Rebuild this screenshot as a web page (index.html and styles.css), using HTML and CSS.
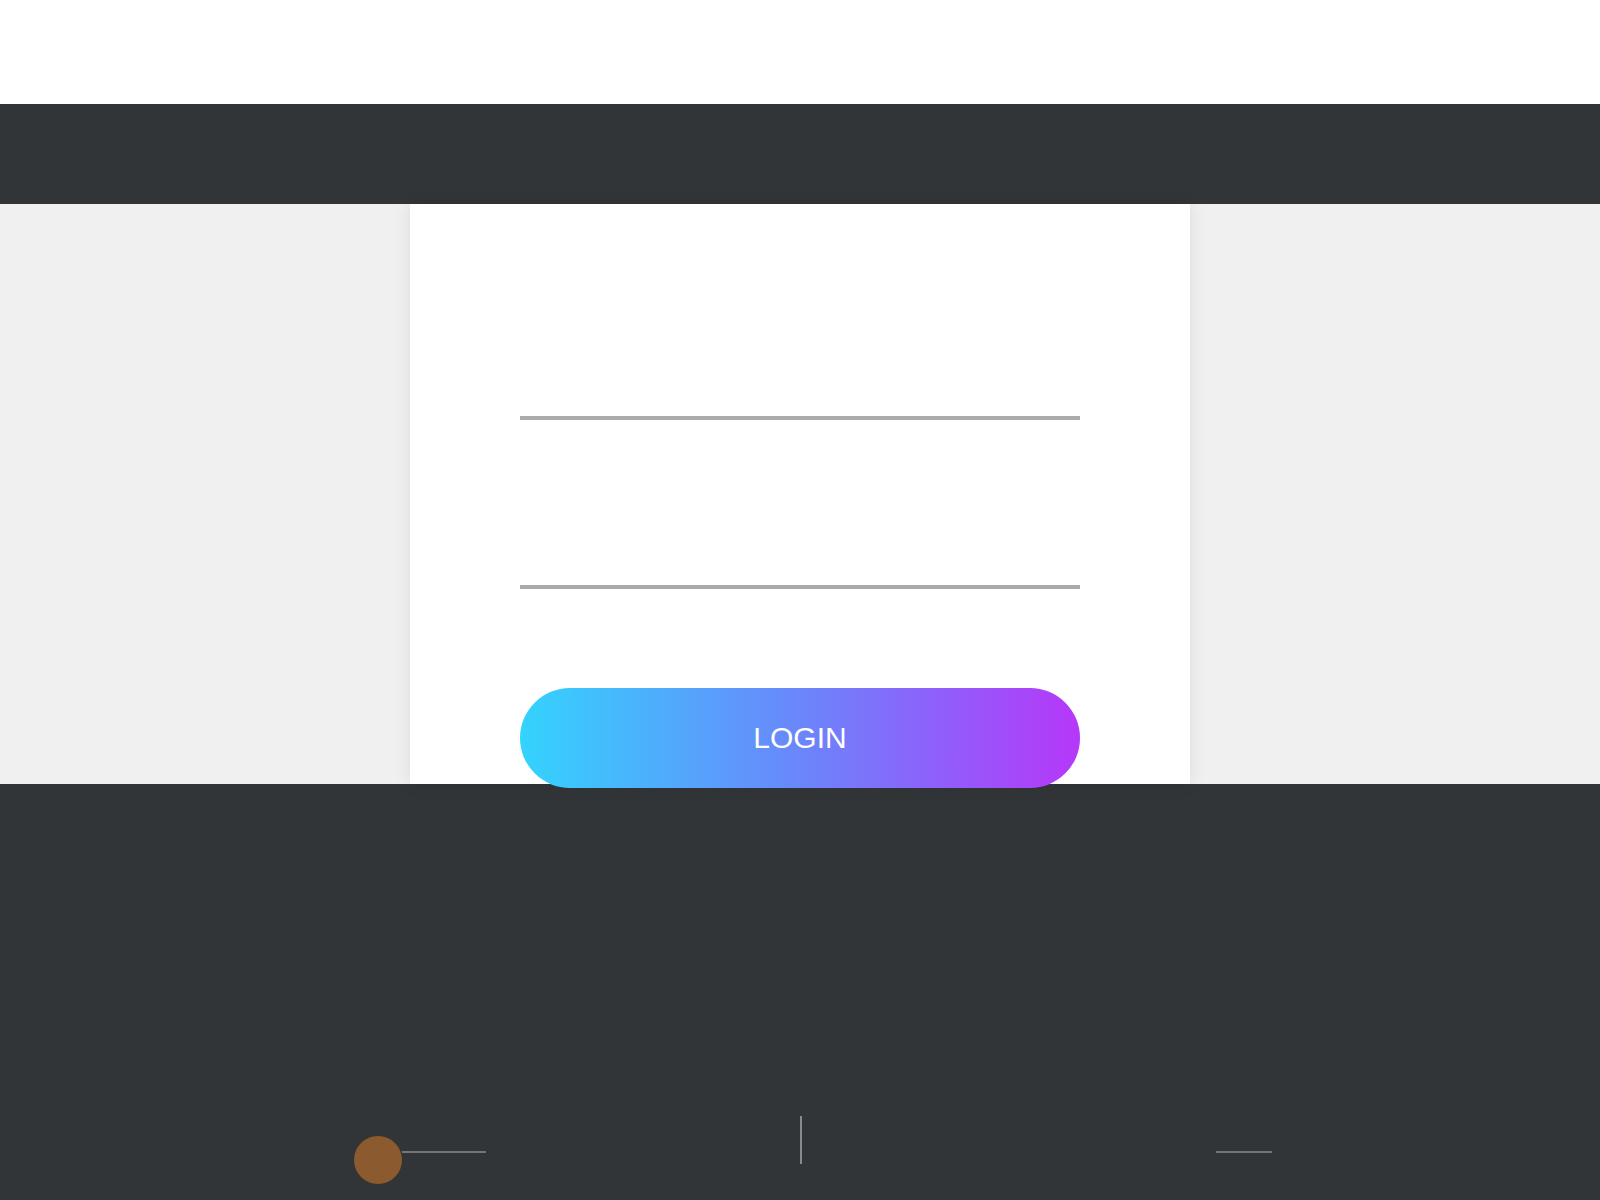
FILE: index.html
```html
<!DOCTYPE html>
<html lang="en">
<head>
<meta charset="utf-8">
<title>Login</title>
<link rel="stylesheet" href="styles.css">
</head>
<body>
<div class="topbar"></div>
<header class="navbar"></header>
<main class="stage">
  <form class="card">
    <input class="field field-user" type="text" aria-label="Username">
    <input class="field field-pass" type="password" aria-label="Password">
    <button class="login-btn" type="button">LOGIN</button>
  </form>
</main>
<footer class="footer">
  <div class="slider-row">
    <span class="dot"></span>
    <span class="hline hline-left"></span>
    <span class="vline"></span>
    <span class="hline hline-right"></span>
  </div>
</footer>
</body>
</html>
```
FILE: styles.css
```css
html, body {
  margin: 0;
  padding: 0;
  background: #ffffff;
  font-family: "Liberation Sans", Arial, sans-serif;
}

.topbar {
  height: 104px;
  background: #ffffff;
}

.navbar {
  height: 100px;
  background: #323538;
}

.stage {
  height: 580px;
  background: #f0f0f0;
  display: flex;
  justify-content: center;
  position: relative;
  z-index: 1;
}

.card {
  width: 780px;
  height: 580px;
  box-sizing: border-box;
  background: #ffffff;
  box-shadow: 0 0 16px rgba(0, 0, 0, 0.09);
  padding: 166px 110px 0;
  display: flex;
  flex-direction: column;
  margin: 0;
}

.field {
  display: block;
  width: 100%;
  height: 50px;
  box-sizing: border-box;
  border: none;
  border-bottom: 4px solid #aaaaaa;
  background: transparent;
  outline: none;
  padding: 0;
  margin: 0;
  flex: none;
  font-family: inherit;
  font-size: 20px;
}

.field-pass {
  margin-top: 119px;
}

.login-btn {
  margin-top: 99px;
  width: 560px;
  height: 100px;
  flex: none;
  border: none;
  border-radius: 50px;
  background: linear-gradient(to right, #34d3fd, #6a86fb 50%, #b637f9);
  color: #ffffff;
  font-family: "Liberation Sans", Arial, sans-serif;
  font-size: 30px;
  padding: 0;
  cursor: pointer;
}

.footer {
  height: 416px;
  background: #323538;
  box-sizing: border-box;
  padding-top: 332px;
}

.slider-row {
  display: flex;
  align-items: flex-start;
  padding-left: 354px;
  height: 68px;
}

.dot {
  width: 48px;
  height: 48px;
  border-radius: 50%;
  background: #8b5a2e;
  margin-top: 20px;
  flex: none;
}

.hline {
  height: 2px;
  background: #767676;
  margin-top: 35px;
  flex: none;
}

.hline-left {
  width: 84px;
}

.vline {
  width: 2px;
  height: 48px;
  background: #8a8a8a;
  margin-left: 314px;
  flex: none;
}

.hline-right {
  width: 56px;
  margin-left: 414px;
}
```
